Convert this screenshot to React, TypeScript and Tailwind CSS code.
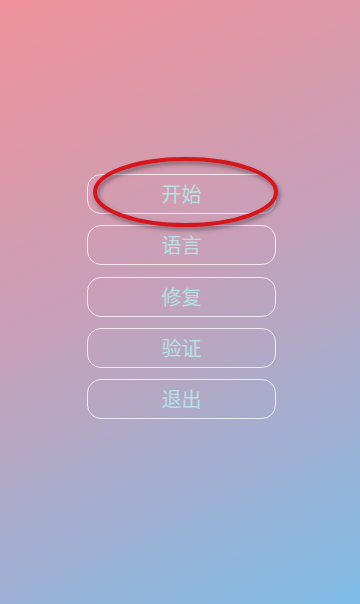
const items = ["开始", "语言", "修复", "验证", "退出"];

function Highlight() {
  return (
    <svg
      className="pointer-events-none absolute left-0 top-0"
      width="360"
      height="260"
      viewBox="0 0 360 260"
    >
      <defs>
        <filter id="shade" x="-20%" y="-40%" width="140%" height="180%">
          <feDropShadow dx="2" dy="3" stdDeviation="2" floodColor="#3a3040" floodOpacity="0.55" />
        </filter>
      </defs>
      <ellipse
        cx="185.5"
        cy="192"
        rx="90.5"
        ry="33"
        fill="none"
        stroke="#d5141c"
        strokeWidth="4"
        filter="url(#shade)"
      />
    </svg>
  );
}

export default function App() {
  return (
    <div className="relative h-[604px] w-[360px] overflow-hidden bg-[linear-gradient(155deg,#f0929a_0%,#c8a0b8_45%,#7fbde8_100%)] font-['Noto_Sans_CJK_SC','Noto_Sans',sans-serif]">
      <div className="flex flex-col gap-[11.25px] pl-[87px] pt-[174px]">
        {items.map((label) => (
          <button
            key={label}
            className="flex h-[40px] w-[189px] items-center justify-center rounded-[14px] border-[1.5px] border-white/75 text-[20px] leading-none text-[#b6e0e6]"
          >
            {label}
          </button>
        ))}
      </div>
      <Highlight />
    </div>
  );
}
